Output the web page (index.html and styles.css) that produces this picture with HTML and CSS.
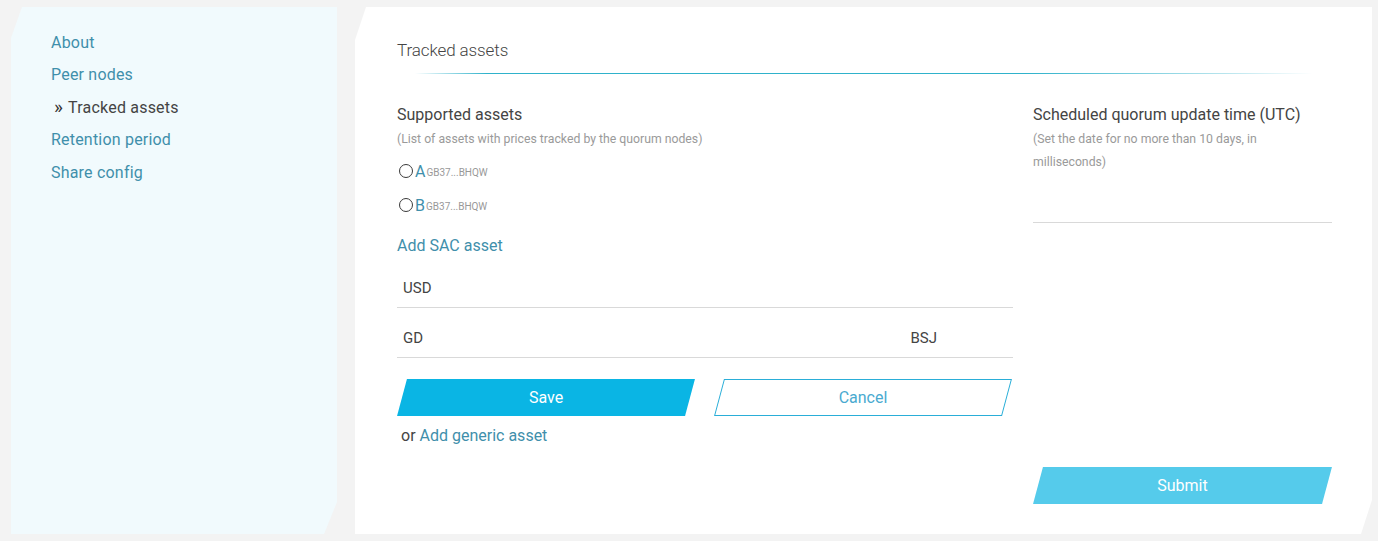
FILE: index.html
```html
<!DOCTYPE html>
<html>
<head>
<meta charset="utf-8">
<link rel="stylesheet" href="styles.css">
</head>
<body>
<div class="layout">
  <aside class="sidebar">
    <nav class="nav">
      <a class="nav-item">About</a>
      <a class="nav-item">Peer nodes</a>
      <a class="nav-item active"><span class="chev">»</span>Tracked assets</a>
      <a class="nav-item">Retention period</a>
      <a class="nav-item">Share config</a>
    </nav>
  </aside>
  <main class="panel">
    <h1 class="title">Tracked assets</h1>
    <div class="title-line"></div>
    <div class="form">
      <section class="col-left">
        <div class="label">Supported assets</div>
        <div class="hint">(List of assets with prices tracked by the quorum nodes)</div>
        <div class="radios">
          <label class="radio"><span class="circle"></span><span class="code">A</span><span class="issuer">GB37...BHQW</span></label>
          <label class="radio"><span class="circle"></span><span class="code">B</span><span class="issuer">GB37...BHQW</span></label>
        </div>
        <a class="link sac">Add SAC asset</a>
        <div class="input first"><span class="grow">USD</span></div>
        <div class="input second"><span class="grow">GD</span><span class="right">BSJ</span></div>
        <div class="buttons">
          <button class="btn btn-primary"><span>Save</span></button>
          <button class="btn btn-outline"><span>Cancel</span></button>
        </div>
        <div class="or">or <a class="link">Add generic asset</a></div>
      </section>
      <section class="col-right">
        <div class="label">Scheduled quorum update time (UTC)</div>
        <div class="hint narrow">(Set the date for no more than 10 days, in milliseconds)</div>
        <div class="input date"></div>
        <button class="btn btn-submit"><span>Submit</span></button>
      </section>
    </div>
  </main>
</div>
</body>
</html>
```

FILE: styles.css
```css
* { box-sizing: border-box; }
html, body { margin: 0; padding: 0; }
body {
  background: #f3f3f3;
  font-family: Roboto, "Liberation Sans", sans-serif;
  color: #444;
}
.layout {
  display: flex;
  gap: 18px;
  padding: 7px 7px 7px 11px;
  height: 541px;
}
.sidebar {
  width: 326px;
  flex: none;
  background: #f1fafd;
  clip-path: polygon(11px 0, 100% 0, 100% 495px, calc(100% - 13px) 100%, 0 100%, 0 31px);
  padding: 20px 0 0 40px;
}
.nav { display: flex; flex-direction: column; }
.nav-item {
  display: block;
  height: 32.4px;
  font-size: 16px;
  line-height: 32px;
  color: #3f8fab;
  letter-spacing: 0.2px;
}
.nav-item.active { color: #444; padding-left: 3px; }
.chev { font-size: 19px; line-height: 0; margin-right: 5px; color: #333; }
.panel {
  flex: 1;
  background: #fff;
  clip-path: polygon(11px 0, 100% 0, 100% 493px, calc(100% - 11px) 100%, 0 100%, 0 33px);
  padding: 31px 40px 30px 42px;
  display: flex;
  flex-direction: column;
}
.title {
  margin: 0;
  font-size: 17px;
  font-weight: 300;
  line-height: 24px;
  letter-spacing: -0.1px;
  color: #444;
}
.title-line {
  height: 0;
  flex: none;
  margin: 11px 19px 0 18px;
  border-top: 1px solid #2fb2cb;
  -webkit-mask-image: linear-gradient(90deg, transparent 0%, #000 8%, #000 68%, rgba(0,0,0,0.35) 90%, transparent 100%);
  mask-image: linear-gradient(90deg, transparent 0%, #000 8%, #000 68%, rgba(0,0,0,0.35) 90%, transparent 100%);
}
.form {
  flex: 1;
  display: flex;
  gap: 20px;
  margin-top: 29px;
}
.col-left { width: 616px; display: flex; flex-direction: column; }
.col-right { flex: 1; display: flex; flex-direction: column; }
.label { font-size: 16px; line-height: 24px; color: #444; }
.hint { font-size: 12.25px; line-height: 23px; color: #9a9a9a; margin-top: 1px; }
.hint.narrow { max-width: 245px; }
.radios { margin-top: 3px; }
.radio {
  display: flex;
  align-items: center;
  height: 34px;
  margin-left: 2px;
}
.circle {
  width: 14px; height: 14px;
  border: 1.4px solid #3a3a3a;
  border-radius: 50%;
  margin-right: 2px;
}
.code { font-size: 16px; color: #3f8fab; }
.issuer { font-size: 10px; color: #999; margin-left: 1px; margin-top: 3px; }
.link { color: #3f8fab; }
.sac { font-size: 16px; line-height: 24px; margin-top: 12px; display: block; }
.input {
  height: 40px;
  border-bottom: 1px solid #d9d9d9;
  display: flex;
  align-items: center;
  padding: 0 6px;
  font-size: 15px;
  color: #444;
}
.input.first { margin-top: 10px; }
.input.second { margin-top: 10px; }
.input .grow { flex: 1; }
.input .right { margin-right: 70px; }
.input.date { margin-top: 24px; height: 25px; }
.buttons { display: flex; gap: 19px; margin-top: 21px; }
.btn {
  position: relative;
  width: 298px;
  height: 37px;
  border: 0;
  background: transparent;
  font-family: Roboto, "Liberation Sans", sans-serif;
  font-size: 16px;
  padding: 0;
  cursor: pointer;
}
.btn::before {
  content: "";
  position: absolute;
  inset: 0 5px;
  transform: skewX(-15deg);
}
.btn span { position: relative; }
.btn-primary { color: #fff; }
.btn-primary::before { background: #0ab5e4; }
.btn-outline { color: #4aaad0; }
.btn-outline::before { border: 1px solid #2aaed8; }
.or { font-size: 16px; line-height: 24px; margin-top: 8px; margin-left: 4px; color: #444; }
.btn-submit { margin-top: auto; color: #fff; width: 299px; }
.btn-submit::before { background: #55cbeb; }
```
